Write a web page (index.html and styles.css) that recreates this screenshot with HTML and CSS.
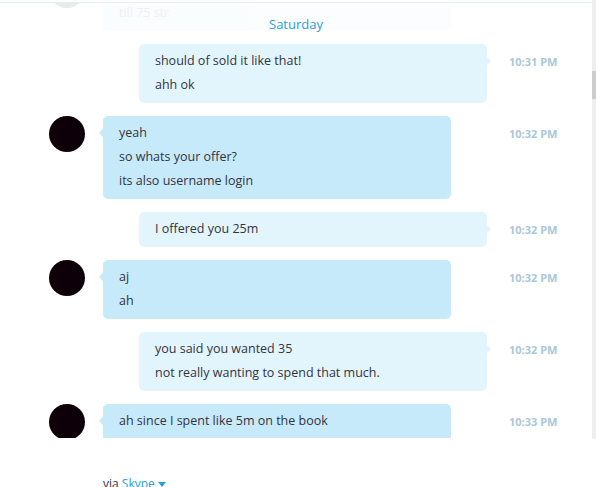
FILE: index.html
```html
<!DOCTYPE html>
<html>
<head>
<meta charset="utf-8">
<link rel="stylesheet" href="styles.css">
</head>
<body>
<div class="app">
  <div class="chat">
    <div class="pane">
      <div class="viewport">
        <div class="list">
          <div class="row in faded">
            <div class="avatar"></div>
            <div class="bubble tall"><p>till 75 str</p></div>
            <div class="time"></div>
          </div>
          <div class="row out">
            <div class="bubble"><p>should of sold it like that!</p><p>ahh ok</p></div>
            <div class="time">10:31 PM</div>
          </div>
          <div class="row in">
            <div class="avatar"></div>
            <div class="bubble"><p>yeah</p><p>so whats your offer?</p><p>its also username login</p></div>
            <div class="time">10:32 PM</div>
          </div>
          <div class="row out">
            <div class="bubble"><p>I offered you 25m</p></div>
            <div class="time">10:32 PM</div>
          </div>
          <div class="row in">
            <div class="avatar"></div>
            <div class="bubble"><p>aj</p><p>ah</p></div>
            <div class="time">10:32 PM</div>
          </div>
          <div class="row out">
            <div class="bubble"><p>you said you wanted 35</p><p>not really wanting to spend that much.</p></div>
            <div class="time">10:32 PM</div>
          </div>
          <div class="row in">
            <div class="avatar"></div>
            <div class="bubble continues"><p>ah since I spent like 5m on the book</p></div>
            <div class="time">10:33 PM</div>
          </div>
        </div>
        <div class="day">Saturday</div>
      </div>
    </div>
    <div class="scrollbar"><div class="thumb"></div></div>
  </div>
  <div class="footer">via <span class="link">Skype</span> <svg class="caret" width="8" height="5" viewBox="0 0 8 5"><path d="M0 0H8L4 5Z" fill="#2a9fd8"/></svg></div>
</div>
</body>
</html>
```
FILE: styles.css
```css
html, body {
  margin: 0;
  padding: 0;
  background: #fff;
}
body {
  font-family: "Open Sans", "Noto Sans", sans-serif;
  color: #333340;
  width: 596px;
  height: 487px;
  overflow: hidden;
}
.app {
  display: flex;
  flex-direction: column;
}
.chat {
  display: flex;
  height: 439px;
}
.pane {
  width: 592px;
  padding-top: 2px;
}
.viewport {
  position: relative;
  border-top: 1px solid #e6eef4;
  height: 435px;
  overflow: hidden;
}
.list {
  display: flex;
  flex-direction: column;
  gap: 13px;
  margin-top: -31px;
}
.row {
  display: grid;
  grid-template-columns: 103px 384px 22px 60px;
  align-items: start;
}
.avatar {
  grid-column: 1;
  grid-row: 1;
  width: 36px;
  height: 36px;
  border-radius: 50%;
  background: #0e0008;
  margin-left: 49px;
}
.bubble {
  grid-column: 2;
  grid-row: 1;
  width: 348px;
  box-sizing: border-box;
  padding: 5px 16px 6px;
  border-radius: 5px;
  position: relative;
  font-size: 12.5px;
  line-height: 24px;
}
.bubble.tall {
  padding-top: 29px;
}
.bubble.continues {
  min-height: 60px;
}
.bubble p {
  margin: 0;
}
.in .bubble {
  background: #c7eafb;
  justify-self: start;
}
.out .bubble {
  background: #e3f5fc;
  justify-self: end;
}
.bubble::after {
  content: "";
  position: absolute;
  top: 14px;
  width: 6px;
  height: 6px;
  border-radius: 1px;
  transform: rotate(45deg);
}
.in .bubble::after {
  left: -3px;
  background: #c7eafb;
}
.out .bubble::after {
  right: -3px;
  background: #e3f5fc;
}
.time {
  grid-column: 4;
  grid-row: 1;
  padding-top: 6px;
  line-height: 24px;
  font-size: 11px;
  font-weight: 700;
  color: #a8c7d9;
  white-space: nowrap;
}
.faded {
  opacity: 0.08;
}
.day {
  position: absolute;
  top: 12px;
  left: 0;
  right: 0;
  text-align: center;
  font-size: 13px;
  line-height: 18px;
  color: #2a9fd8;
}
.scrollbar {
  width: 4px;
  background: #eeeeee;
  position: relative;
}
.thumb {
  margin-top: 71px;
  height: 28px;
  background: #cdcdcd;
}
.footer {
  margin-top: 37px;
  padding-left: 103px;
  font-size: 12px;
  line-height: 16px;
  color: #333340;
}
.link {
  color: #2a9fd8;
}
.caret {
  vertical-align: middle;
}
```
